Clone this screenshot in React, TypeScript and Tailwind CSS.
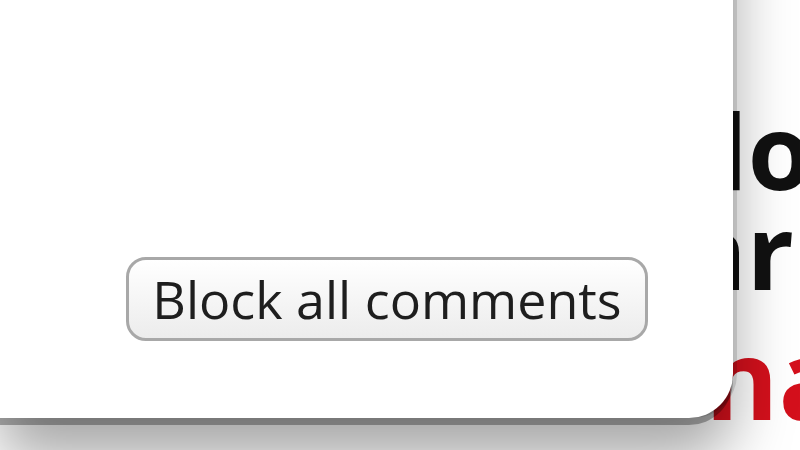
export default function App() {
  return (
    <div className="relative h-[450px] w-[800px] overflow-hidden bg-white font-['Open_Sans',sans-serif]">
      {/* page behind the popup */}
      <div className="pt-[100px] text-[104px] font-bold leading-[100px] whitespace-nowrap text-[#111]">
        <p className="pl-[716px]">lo</p>
        <p className="pl-[684px]">ar</p>
        <p className="mt-[27px] pl-[705px] text-[112px] text-[#d4101c]">na</p>
      </div>

      {/* popup */}
      <div className="absolute left-0 top-[-120px] flex h-[538px] w-[733px] items-end justify-end rounded-br-[44px] bg-white pr-[85px] pb-[77px] shadow-[0_7px_0_rgba(0,0,0,0.3),4px_0_0_rgba(0,0,0,0.12),0_40px_60px_rgba(0,0,0,0.35)]">
        <button className="flex h-[84px] w-[522px] items-center justify-center rounded-[20px] border-[3px] border-[#a8a8a8] bg-gradient-to-b from-white to-[#ececec] text-[52px] leading-none text-[#1e1e1e]">
          Block all comments
        </button>
      </div>
    </div>
  );
}
